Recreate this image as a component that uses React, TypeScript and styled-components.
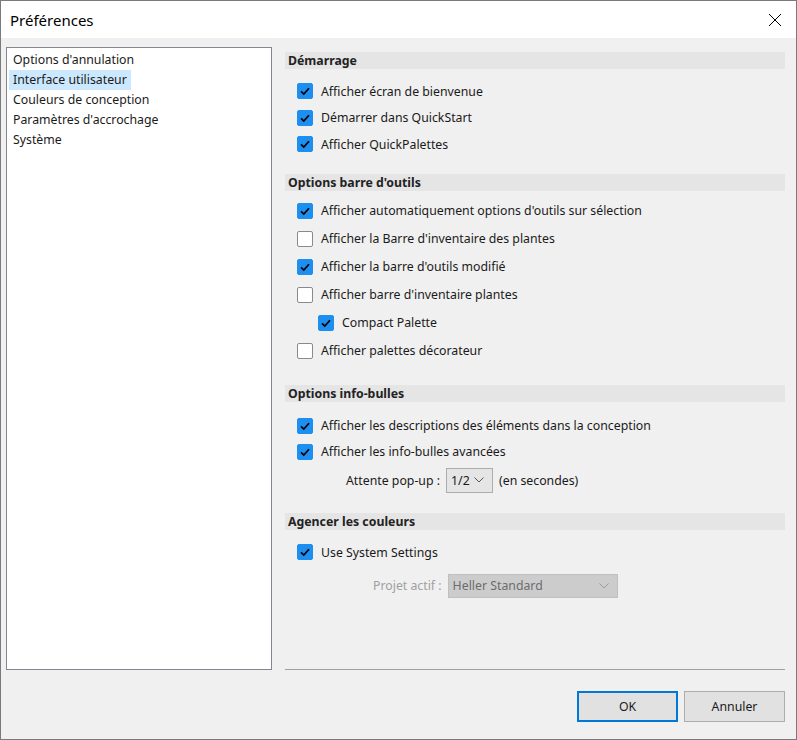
import React from "react";
import styled, { createGlobalStyle } from "styled-components";

const GlobalStyle = createGlobalStyle`
  html, body {
    margin: 0;
    padding: 0;
    background: #f0f0f0;
  }
  * {
    box-sizing: border-box;
  }
`;

const Window = styled.div`
  width: 797px;
  height: 740px;
  border: 1px solid #7a7a7a;
  background: #f0f0f0;
  display: flex;
  flex-direction: column;
  font-family: "Noto Sans", "Open Sans", sans-serif;
  font-size: 12.3px;
  color: #1a1a1a;
`;

const TitleBar = styled.div`
  height: 37px;
  background: #ffffff;
  display: flex;
  align-items: center;
  justify-content: space-between;
  padding: 0 14px 0 9px;
  flex-shrink: 0;
`;

const Title = styled.span`
  font-size: 15px;
  color: #000;
`;

const CloseButton = styled.span`
  display: flex;
  width: 14px;
  height: 14px;
`;

const Body = styled.div`
  flex: 1;
  display: flex;
  flex-direction: column;
  padding: 9px 11px 16px 5px;
`;

const Main = styled.div`
  display: flex;
  gap: 13px;
  height: 623px;
`;

const ListBox = styled.div`
  width: 266px;
  height: 100%;
  background: #fff;
  border: 1px solid #828790;
  padding: 2px 2px;
  display: flex;
  flex-direction: column;
  align-items: flex-start;
`;

const ListItem = styled.div<{ $selected?: boolean }>`
  height: 20px;
  line-height: 20px;
  padding: 0 4px;
  background: ${(p) => (p.$selected ? "#cce8ff" : "transparent")};
`;

const Panel = styled.div`
  flex: 1;
  display: flex;
  flex-direction: column;
  padding-top: 5px;
  border-bottom: 1px solid #a0a0a0;
`;

const Section = styled.div<{ $gap: number }>`
  display: flex;
  flex-direction: column;
  margin-bottom: ${(p) => p.$gap}px;
`;

const SectionHeader = styled.div<{ $after: number }>`
  height: 17px;
  line-height: 17px;
  background: #e5e5e5;
  font-weight: 700;
  padding-left: 3px;
  color: #222;
  margin-bottom: ${(p) => p.$after}px;
`;

const Row = styled.label<{ $h: number; $indent?: number }>`
  height: ${(p) => p.$h}px;
  display: flex;
  align-items: center;
  gap: 8px;
  padding-left: ${(p) => p.$indent ?? 12}px;
`;

const Box = styled.span<{ $checked: boolean }>`
  width: 16px;
  height: 16px;
  border-radius: 2px;
  display: flex;
  align-items: center;
  justify-content: center;
  background: ${(p) => (p.$checked ? "#1c8ff0" : "#ffffff")};
  border: 1px solid ${(p) => (p.$checked ? "#1c8ff0" : "#8a8a8a")};
  flex-shrink: 0;
`;

const FieldRow = styled.div<{ $indent: number; $h: number; $top?: number }>`
  display: flex;
  align-items: center;
  height: ${(p) => p.$h}px;
  margin-top: ${(p) => p.$top ?? 0}px;
  padding-left: ${(p) => p.$indent}px;
  gap: 6px;
`;

const FieldLabel = styled.span<{ $disabled?: boolean }>`
  color: ${(p) => (p.$disabled ? "#a0a0a0" : "#1a1a1a")};
`;

const Select = styled.div<{ $width: number; $h: number; $disabled?: boolean }>`
  flex: none;
  width: ${(p) => p.$width}px;
  height: ${(p) => p.$h}px;
  display: flex;
  align-items: center;
  justify-content: space-between;
  padding: 0 8px 0 4px;
  background: ${(p) => (p.$disabled ? "#cccccc" : "#e5e5e5")};
  border: 1px solid ${(p) => (p.$disabled ? "#bfbfbf" : "#adadad")};
  color: ${(p) => (p.$disabled ? "#6d6d6d" : "#1a1a1a")};
`;

const Footer = styled.div`
  display: flex;
  justify-content: flex-end;
  gap: 6px;
  margin-top: 21px;
`;

const Button = styled.button<{ $primary?: boolean }>`
  width: 101px;
  height: 31px;
  font-family: inherit;
  font-size: 12.3px;
  color: #1a1a1a;
  background: #e1e1e1;
  border: ${(p) => (p.$primary ? "2px solid #0078d7" : "1px solid #adadad")};
  padding: 0;
`;

const Check = () => (
  <svg width="12" height="12" viewBox="0 0 12 12">
    <path d="M2 6.3 L4.8 9 L10 3.2" fill="none" stroke="#000" strokeWidth="1.7" />
  </svg>
);

const Chevron = ({ color }: { color: string }) => (
  <svg width="10" height="6" viewBox="0 0 10 6">
    <path d="M0.5 0.5 L5 5 L9.5 0.5" fill="none" stroke={color} strokeWidth="1" />
  </svg>
);

const CheckRow = ({
  label,
  checked,
  h,
  indent,
}: {
  label: string;
  checked: boolean;
  h: number;
  indent?: number;
}) => (
  <Row $h={h} $indent={indent}>
    <Box $checked={checked}>{checked && <Check />}</Box>
    <span>{label}</span>
  </Row>
);

const listItems = [
  "Options d'annulation",
  "Interface utilisateur",
  "Couleurs de conception",
  "Paramètres d'accrochage",
  "Système",
];

export default function App() {
  return (
    <>
      <GlobalStyle />
      <Window>
        <TitleBar>
          <Title>Préférences</Title>
          <CloseButton>
            <svg width="14" height="14" viewBox="0 0 14 14">
              <path d="M1 1 L13 13 M13 1 L1 13" stroke="#000" strokeWidth="1" />
            </svg>
          </CloseButton>
        </TitleBar>
        <Body>
          <Main>
            <ListBox>
              {listItems.map((item) => (
                <ListItem key={item} $selected={item === "Interface utilisateur"}>
                  {item}
                </ListItem>
              ))}
            </ListBox>
            <Panel>
              {/* démarrage */}
              <Section $gap={16}>
                <SectionHeader $after={9}>Démarrage</SectionHeader>
                <CheckRow h={26.5} checked label="Afficher écran de bienvenue" />
                <CheckRow h={26.5} checked label="Démarrer dans QuickStart" />
                <CheckRow h={26.5} checked label="Afficher QuickPalettes" />
              </Section>

              {/* barre d'outils */}
              <Section $gap={20}>
                <SectionHeader $after={6}>Options barre d'outils</SectionHeader>
                <CheckRow h={28} checked label="Afficher automatiquement options d'outils sur sélection" />
                <CheckRow h={28} checked={false} label="Afficher la Barre d'inventaire des plantes" />
                <CheckRow h={28} checked label="Afficher la barre d'outils modifié" />
                <CheckRow h={28} checked={false} label="Afficher barre d'inventaire plantes" />
                <CheckRow h={28} indent={33} checked label="Compact Palette" />
                <CheckRow h={28} checked={false} label="Afficher palettes décorateur" />
              </Section>

              {/* info-bulles */}
              <Section $gap={19}>
                <SectionHeader $after={11}>Options info-bulles</SectionHeader>
                <CheckRow h={26} checked label="Afficher les descriptions des éléments dans la conception" />
                <CheckRow h={26} checked label="Afficher les info-bulles avancées" />
                <FieldRow $indent={61} $h={27} $top={2}>
                  <FieldLabel>Attente pop-up :</FieldLabel>
                  <Select $width={47} $h={25}>
                    <span>1/2</span>
                    <Chevron color="#555" />
                  </Select>
                  <FieldLabel>(en secondes)</FieldLabel>
                </FieldRow>
              </Section>

              {/* couleurs */}
              <Section $gap={0}>
                <SectionHeader $after={9}>Agencer les couleurs</SectionHeader>
                <CheckRow h={27} checked label="Use System Settings" />
                <FieldRow $indent={88} $h={24} $top={8}>
                  <FieldLabel $disabled>Projet actif :</FieldLabel>
                  <Select $width={170} $h={24} $disabled>
                    <span>Heller Standard</span>
                    <Chevron color="#9a9a9a" />
                  </Select>
                </FieldRow>
              </Section>
            </Panel>
          </Main>
          <Footer>
            <Button $primary>OK</Button>
            <Button>Annuler</Button>
          </Footer>
        </Body>
      </Window>
    </>
  );
}
